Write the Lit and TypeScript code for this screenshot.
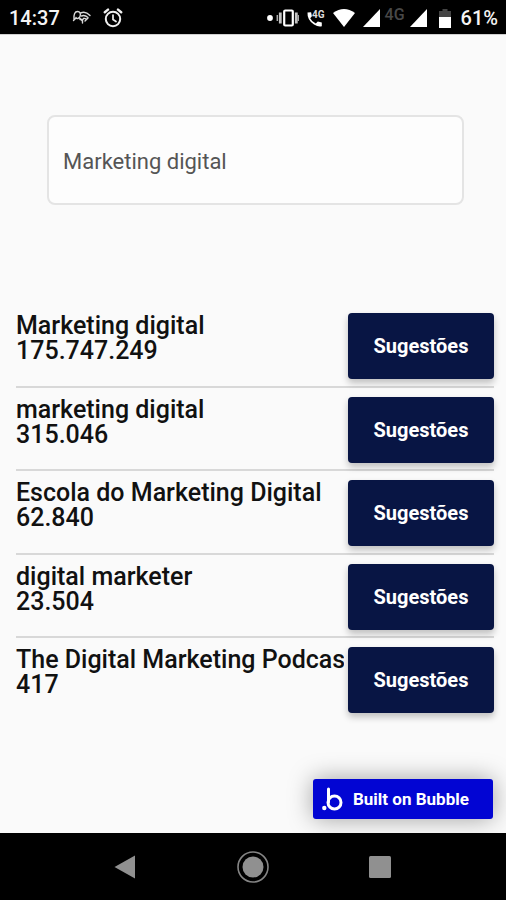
import { LitElement, html, css, svg } from "lit";
import { customElement, property, state } from "lit/decorators.js";

interface Interest {
  name: string;
  audience: string;
}

const INTERESTS: Interest[] = [
  { name: "Marketing digital", audience: "175.747.249" },
  { name: "marketing digital", audience: "315.046" },
  { name: "Escola do Marketing Digital", audience: "62.840" },
  { name: "digital marketer", audience: "23.504" },
  { name: "The Digital Marketing Podcast", audience: "417" },
];

const signal = svg`<path d="M17 0V18H0Z" fill="#fff"/>`;

@customElement("status-bar")
export class StatusBar extends LitElement {
  static styles = css`
    :host {
      display: flex;
      align-items: center;
      justify-content: space-between;
      height: 34px;
      padding: 2px 8px 0 9px;
      box-sizing: border-box;
      background: #000;
      color: #f4f4f4;
      font: 500 20px/24px Roboto, sans-serif;
    }
    .side {
      display: flex;
      align-items: center;
    }
    .left {
      gap: 12px;
    }
    .right {
      gap: 8px;
    }
    svg {
      display: block;
    }
    .network {
      align-self: flex-start;
      margin: 0 -3px;
      color: #484848;
      font: 500 16px/18px Roboto, sans-serif;
    }
    .level {
      margin: 0 2px 0 4px;
    }
  `;

  render() {
    return html`
      <div class="side left">
        <span>14:37</span>
        <svg width="19" height="18" viewBox="0 0 19 18" fill="none" stroke="#d8d8d8" stroke-width="1.4" stroke-linecap="round">
          <path d="M2 10.500C1.500 5 3 2.500 5.500 2.500S9 5 8 7.500 4.500 10 4 8.500M1.500 11.500 4 9M7 8.500l3 3" />
          <path d="M8.500 4q5-2.500 9.500 2.500M9.500 7q3-1.500 6.500 1.500M11.500 9.500q1.500-.5 2.500.5M8 10.500h3M10.500 11v3M13 12l3-3" />
        </svg>
        <svg width="20" height="20" viewBox="0 0 20 20" fill="none" stroke="#f0f0f0" stroke-width="2" stroke-linecap="round">
          <circle cx="10" cy="11" r="7.200" />
          <path d="M1.800 4.200 5 1.600M18.200 4.200 15 1.600" stroke-width="2.400" />
          <path d="M10 7v4.500l3 2" stroke-width="1.700" />
        </svg>
      </div>
      <div class="side right">
        <svg width="33" height="18" viewBox="0 0 33 18">
          <circle cx="4" cy="9" r="2.900" fill="#fff" />
          <rect x="18.200" y="1.500" width="8.600" height="15" rx="1" fill="none" stroke="#fff" stroke-width="2.200" />
          <path d="M14.300 3.500v11M30.300 3.500v11" stroke="#c4c4c4" stroke-width="2.800" />
          <path d="M11.300 6v6M32.500 6v6" stroke="#aaa" stroke-width="1.500" />
        </svg>
        <svg width="18" height="20" viewBox="0 0 18 20">
          <path d="M.5 4.500 4.100 4.300 4.900 8.200 3.200 10.200Q5 14 8.800 15.500L10.800 13.500 14.800 14.500V18.200Q11.500 19.200 7 16.600 0 12 .5 4.500Z" fill="#fff" />
          <text x="5" y="10" fill="#ddd" font-family="Roboto, sans-serif" font-size="10" font-weight="700">4G</text>
        </svg>
        <svg width="22" height="18" viewBox="0 0 22 18">
          <path d="M0 4Q11-4 22 4L11 18Z" fill="#fff" />
        </svg>
        <svg width="17" height="18" viewBox="0 0 17 18">${signal}</svg>
        <span class="network">4G</span>
        <svg width="17" height="18" viewBox="0 0 17 18">${signal}</svg>
        <svg class="level" width="12" height="19" viewBox="0 0 12 19">
          <path d="M3.500 0h5v2H12v6H0V2h3.500Z" fill="#444" />
          <path d="M0 8h12v11H0Z" fill="#fff" />
        </svg>
        <span>61%</span>
      </div>
    `;
  }
}

@customElement("interest-row")
export class InterestRow extends LitElement {
  @property() name = "";
  @property() audience = "";

  static styles = css`
    :host {
      display: flex;
      box-sizing: border-box;
      padding-top: 9px;
      font-family: Roboto, sans-serif;
    }
    .text {
      flex: 1;
      min-width: 0;
      margin-right: 4px;
      overflow-x: clip;
      color: #111;
      font-size: 25px;
      font-weight: 500;
      line-height: 25px;
      white-space: nowrap;
    }
    .suggest {
      flex: none;
      width: 146px;
      height: 66px;
      padding: 0;
      border: 0;
      border-radius: 4px;
      background: #081544;
      box-shadow: 0 4px 7px rgba(0, 0, 0, 0.24);
      color: #fff;
      font: 700 20px/24px Roboto, sans-serif;
    }
  `;

  render() {
    return html`
      <div class="text">
        <div>${this.name}</div>
        <div>${this.audience}</div>
      </div>
      <button class="suggest" type="button">Sugestões</button>
    `;
  }
}

@customElement("nav-bar")
export class NavBar extends LitElement {
  static styles = css`
    :host {
      display: flex;
      align-items: center;
      justify-content: center;
      gap: 96px;
      height: 67px;
      background: #000;
    }
    button {
      padding: 0;
      border: 0;
      background: none;
    }
    svg {
      display: block;
    }
  `;

  render() {
    return html`
      <button type="button" aria-label="Back">
        <svg width="32" height="32" viewBox="0 0 32 32">
          <path d="M5.500 16 26 4.500v23Z" fill="#909090" />
        </svg>
      </button>
      <button type="button" aria-label="Home">
        <svg width="32" height="32" viewBox="0 0 32 32">
          <circle cx="16" cy="16" r="15" fill="none" stroke="#858585" stroke-width="1.600" />
          <circle cx="16" cy="16" r="10.500" fill="#909090" />
        </svg>
      </button>
      <button type="button" aria-label="Recent apps">
        <svg width="32" height="32" viewBox="0 0 32 32">
          <rect x="4" y="5" width="22" height="22" rx="1.500" fill="#909090" />
        </svg>
      </button>
    `;
  }
}

@customElement("app-root")
export class AppRoot extends LitElement {
  @state() private query = "Marketing digital";

  static styles = css`
    :host {
      display: flex;
      flex-direction: column;
      min-height: 100vh;
      background: #fafafa;
      font-family: Roboto, sans-serif;
    }
    main {
      flex: 1;
      display: flex;
      flex-direction: column;
      border-top: 1px solid #d0d0d0;
      overflow: hidden;
    }
    .search {
      height: 90px;
      margin: 80px 42px 0 47px;
      padding: 2px 14px 0;
      box-sizing: border-box;
      border: 2px solid #e4e4e4;
      border-radius: 8px;
      background: #fdfdfd;
      color: #555;
      font: 400 22px/24px Roboto, sans-serif;
    }
    .list {
      display: grid;
      grid-template-columns: minmax(0, 1fr);
      grid-template-rows: repeat(5, 1fr);
      height: 418px;
      margin: 99px 12px 0 16px;
    }
    .item:not(:last-child) {
      border-bottom: 2px solid #d8d8d8;
    }
    .badge {
      display: flex;
      align-items: center;
      align-self: flex-end;
      gap: 10px;
      box-sizing: border-box;
      width: 180px;
      height: 40px;
      margin: auto 13px 14px 0;
      padding-left: 9px;
      border-radius: 3px;
      background: #0205d3;
      box-shadow: 0 0 24px rgba(0, 0, 0, 0.36);
      color: #fff;
      font-size: 17px;
      font-weight: 700;
      line-height: 20px;
      text-decoration: none;
    }
  `;

  render() {
    return html`
      <status-bar></status-bar>
      <main>
        <input
          class="search"
          type="text"
          aria-label="Interesse"
          .value=${this.query}
          @input=${(e: Event) => (this.query = (e.target as HTMLInputElement).value)}
        />
        <div class="list">
          ${INTERESTS.map(
            (i) => html`<interest-row class="item" .name=${i.name} .audience=${i.audience}></interest-row>`,
          )}
        </div>
        <a class="badge" href="#bubble">
          <svg width="21" height="24" viewBox="0 0 21 24" fill="none" stroke="#fff">
            <path d="M6.500 2V15" stroke-width="3" stroke-linecap="round" />
            <circle cx="12.500" cy="15.500" r="6.500" stroke-width="3" />
            <circle cx="2.300" cy="21" r="2.200" fill="#fff" stroke="none" />
          </svg>
          <span>Built on Bubble</span>
        </a>
      </main>
      <nav-bar></nav-bar>
    `;
  }
}
